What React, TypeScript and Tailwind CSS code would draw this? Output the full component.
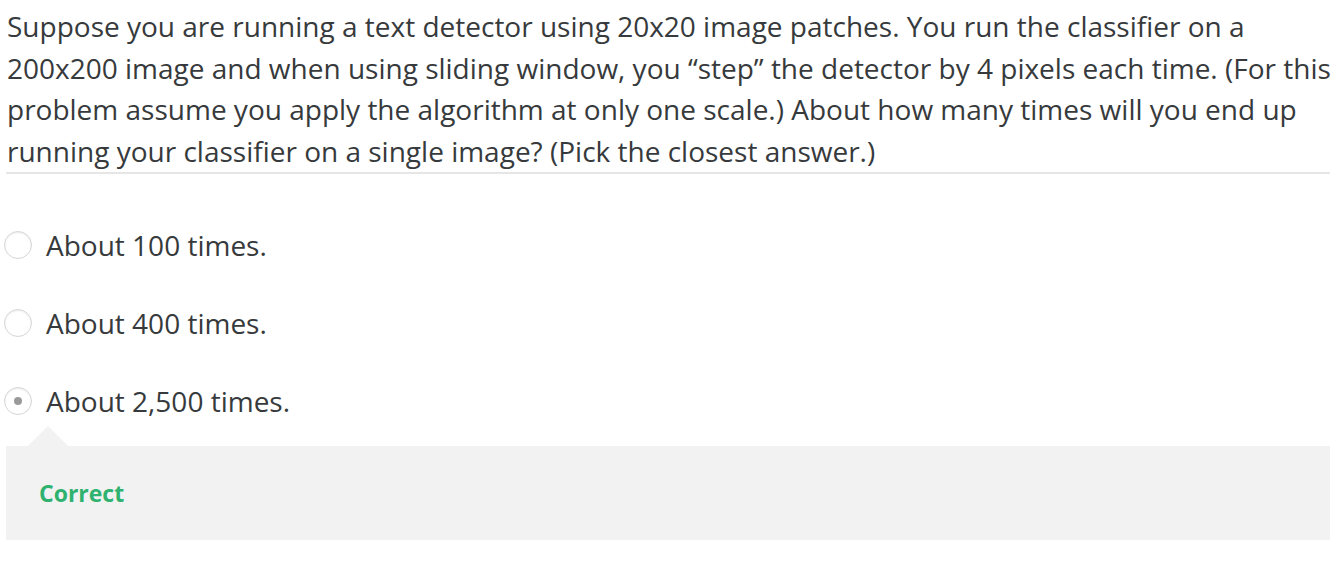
import React from "react";

type Option = { label: string; selected?: boolean };

const options: Option[] = [
  { label: "About 100 times." },
  { label: "About 400 times." },
  { label: "About 2,500 times.", selected: true },
];

const questionLines = [
  "Suppose you are running a text detector using 20x20 image patches. You run the classifier on a",
  "200x200 image and when using sliding window, you “step” the detector by 4 pixels each time. (For this",
  "problem assume you apply the algorithm at only one scale.) About how many times will you end up",
  "running your classifier on a single image? (Pick the closest answer.)",
];

const Radio = ({ selected }: { selected?: boolean }) => (
  <span className="flex h-[28px] w-[28px] shrink-0 items-center justify-center rounded-full border border-[#d6d6d6] bg-white shadow-[inset_0_1px_2px_rgba(0,0,0,0.08)]">
    {selected && <span className="h-[8px] w-[8px] rounded-full bg-[#9a9a9a]" />}
  </span>
);

const App = () => {
  return (
    <div className="min-h-[564px] bg-white font-['Open_Sans',sans-serif] text-[#373a3c]">
      <div className="ml-[6px] w-[1324px] pt-[6px]">
        <p className="border-b-2 border-[#e6e6e6] pl-[1px] text-[28px] leading-[41.6px] whitespace-nowrap">
          {questionLines.map((line, i) => (
            <React.Fragment key={i}>
              {line}
              {i < questionLines.length - 1 && <br />}
            </React.Fragment>
          ))}
        </p>

        <div className="mt-[57px] flex flex-col gap-[50px]">
          {options.map((option) => (
            <label key={option.label} className="-ml-[2px] flex items-center gap-[14px]">
              <Radio selected={option.selected} />
              <span className="text-[28px] leading-[28px]">{option.label}</span>
            </label>
          ))}
        </div>

        <div className="relative mt-[31px] h-[94px] bg-[#f2f2f2] px-[33px] py-[31px]">
          <span className="absolute -top-[20px] left-[22px] h-0 w-0 border-x-[20px] border-b-[20px] border-x-transparent border-b-[#f2f2f2]" />
          <span className="block text-[23px] font-bold leading-[32px] text-[#2fb26f]">Correct</span>
        </div>
      </div>
    </div>
  );
};

export default App;
